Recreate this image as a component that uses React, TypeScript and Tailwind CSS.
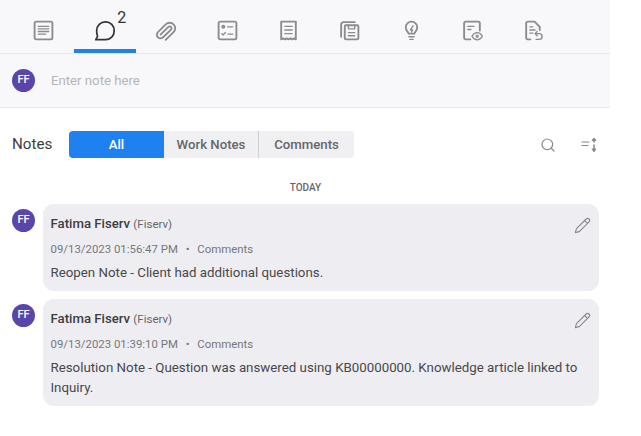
import { Search, Pencil, Paperclip } from 'lucide-react'
import type { ReactNode } from 'react'

const strokeProps = {
  fill: 'none',
  stroke: 'currentColor',
  strokeWidth: 1.8,
  strokeLinecap: 'round' as const,
  strokeLinejoin: 'round' as const,
}

function Icon({ children }: { children: ReactNode }) {
  return (
    <svg width="23" height="23" viewBox="0 0 22 22" {...strokeProps}>
      {children}
    </svg>
  )
}

const tabIcons: ReactNode[] = [
  <Icon key="details">
    <rect x="2.500" y="2.500" width="17" height="17" rx="1.500" />
    <path d="M6 7h10M6 9.500h10M6 12h10M6 14.500h7" strokeWidth="1.300" />
  </Icon>,
  <svg key="notes" width="26" height="26" viewBox="0 0 24 24" {...strokeProps} strokeWidth="1.600">
    <path d="M12.500 3.500c4.600 0 8 3.500 8 8.200s-3.400 8.300-8 8.300H3.500l1.700-3.200C4.400 15.400 4.300 13.500 4.300 11.700c0-4.700 3.600-8.200 8.200-8.200z" />
  </svg>,
  <Paperclip key="attach" size={22} strokeWidth={2} className="scale-x-[-1] rotate-[-90deg]" />,
  <Icon key="tasks">
    <rect x="2.500" y="2.500" width="17" height="17" rx="1.500" />
    <circle cx="7" cy="7.500" r="1" fill="currentColor" />
    <path d="M11 7.500h5M5.500 14l1.300 1.300L9 13M11.500 14.500h4.500" strokeWidth="1.300" />
  </Icon>,
  <Icon key="receipt">
    <path d="M4 2.500h14v17l-1.750-1-1.750 1-1.750-1-1.750 1-1.750-1-1.750 1-1.750-1L4 19.500z" />
    <path d="M7.500 7h7M7.500 10.500h7M7.500 14h7" strokeWidth="1.300" />
  </Icon>,
  <Icon key="copies">
    <path d="M3 17V5.500C3 4 4 3 5.500 3H16" />
    <rect x="6.500" y="6" width="13" height="13.500" rx="1" />
    <path d="M10 6v3.500h6V6M10 13h6M10 16h6" strokeWidth="1.300" />
  </Icon>,
  <Icon key="idea">
    <path d="M11 2.500a5.500 5.500 0 0 1 5.500 5.500c0 2.700-1.700 3.900-2.800 6H8.300c-1.100-2.100-2.800-3.300-2.800-6A5.500 5.500 0 0 1 11 2.500z" />
    <path d="M12.500 6.500 10 10.500h2l-1 2M8.500 17h5M9.500 19.500h3" strokeWidth="1.300" />
  </Icon>,
  <Icon key="review">
    <path d="M9 19.500H4.500A1.500 1.500 0 0 1 3 18V4a1.500 1.500 0 0 1 1.500-1.500h12A1.500 1.500 0 0 1 18 4v7" />
    <path d="M6.500 7h6M6.500 10h3" strokeWidth="1.300" />
    <path d="M10.500 16.500c1.500-2.600 3.400-3.500 5-3.500s3.500.9 5 3.500c-1.500 2.600-3.400 3.500-5 3.500s-3.500-.9-5-3.500z" strokeWidth="1.300" />
    <circle cx="15.500" cy="16.500" r="1" strokeWidth="1.200" />
  </Icon>,
  <Icon key="return">
    <path d="M8 19.500H5.500A1.500 1.500 0 0 1 4 18V4a1.500 1.500 0 0 1 1.500-1.500H12l5 5v3" />
    <path d="M7.500 7.500h3M7.500 10.500h5M7.500 13.500h3" strokeWidth="1.300" />
    <path d="M12.500 14h4a2.500 2.500 0 0 1 0 5.500h-3M14.500 12l-2 2 2 2" strokeWidth="1.300" />
  </Icon>,
]

function Avatar() {
  return (
    <div className="flex h-[23px] w-[23px] shrink-0 items-center justify-center rounded-full bg-[#5b45ad] text-[11px] font-medium text-white">
      FF
    </div>
  )
}

function Note({ when, children }: { when: string; children: ReactNode }) {
  return (
    <div className="flex items-start">
      <div className="w-[43px] shrink-0 pt-[5px] pl-[12px]">
        <Avatar />
      </div>
      <div className="relative w-[556px] rounded-[11px] bg-[#eeeef2] pt-[10px] pr-3 pb-[8px] pl-[7.5px]">
        <div className="h-[19px] text-[13.2px] leading-[19px] font-medium text-[#3d3d40]">
          Fatima Fiserv <span className="text-[11.5px] font-normal text-[#66666a]">(Fiserv)</span>
        </div>
        <div className="mt-[7px] h-[19px] text-[11.4px] leading-[19px] text-[#77777b]">
          {when} <span className="mx-[5px]">•</span> Comments
        </div>
        <div className="mt-[4px] text-[13.3px] leading-[20px] text-[#48484c]">{children}</div>
        <Pencil size={17} strokeWidth={1.6} className="absolute top-[13px] right-[8px] text-[#88888c]" />
      </div>
    </div>
  )
}

export default function App() {
  return (
    <div className="h-[436px] w-[641px] overflow-hidden bg-white font-['Roboto',sans-serif]">
      <div className="w-[610px]">
        <div className="flex h-[54px] items-stretch border-b border-[#e9e9ec] bg-[#f8f8fb] pl-[13px] text-[#8c8c8c]">
          {tabIcons.map((icon, i) => (
            <div
              key={i}
              className={
                i === 1
                  ? 'relative flex w-[61.25px] items-center justify-center border-b-[4px] border-[#2680e3] pt-[12px] text-[#333338]'
                  : 'flex w-[61.25px] items-center justify-center pt-[8px]'
              }
            >
              {icon}
              {i === 1 && <span className="absolute top-[10px] left-[43px] text-[16px] leading-[16px]">2</span>}
            </div>
          ))}
        </div>
        <div className="flex h-[54px] items-center gap-[16px] border-b border-[#e9e9ec] bg-[#f8f8fb] pl-[12px]">
          <Avatar />
          <span className="text-[13.2px] text-[#b5b5b8]">Enter note here</span>
        </div>

        <div className="mt-[23px] flex h-[27px] items-center pr-[11px] pl-[12px]">
          <span className="w-[57px] text-[15.2px] text-[#3d3d40]">Notes</span>
          <div className="flex h-[27px] w-[285px] overflow-hidden rounded-[4px] bg-[#f0f0f2] text-[13.2px] font-medium">
            <div className="flex w-[95px] items-center justify-center bg-[#1f80ef] text-white">All</div>
            <div className="flex w-[95px] items-center justify-center border-r border-[#cfcfd2] text-[#66666a]">Work Notes</div>
            <div className="flex flex-1 items-center justify-center text-[#66666a]">Comments</div>
          </div>
          <Search size={16} strokeWidth={1.8} className="mr-[25px] ml-auto text-[#88888c]" />
          <svg width="18" height="16" viewBox="0 0 18 16" {...strokeProps} strokeWidth="1.200" className="text-[#88888c]">
            <path d="M1 5h7M1 8.500h6" />
            <path d="M13 2v3M13 8v5.500" strokeWidth="1.500" />
            <path d="M11.300 3.500 13 1.500l1.700 2zM11.300 12 13 14.500l1.700-2.500z" fill="currentColor" />
          </svg>
        </div>

        <div className="mt-[23px] pl-[1px] text-center text-[10px] leading-[14px] font-medium text-[#66666a]">TODAY</div>

        <div className="mt-[9px] flex flex-col gap-[8px]">
          <Note when="09/13/2023 01:56:47 PM">Reopen Note - Client had additional questions.</Note>
          <Note when="09/13/2023 01:39:10 PM">
            Resolution Note - Question was answered using KB00000000. Knowledge article linked to Inquiry.
          </Note>
        </div>
      </div>
    </div>
  )
}
